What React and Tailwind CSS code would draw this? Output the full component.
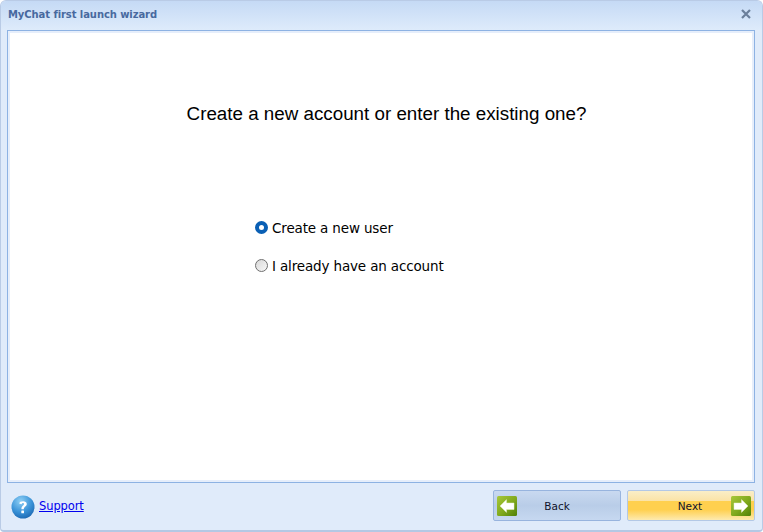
// App.jsx - MyChat first launch wizard
const uiFont = "font-['Tahoma','DejaVu_Sans',sans-serif]"

function ArrowTile({ flip }) {
  return (
    <svg width="20" height="20" viewBox="0 0 20 20" className="shrink-0">
      <defs>
        <linearGradient id={flip ? 'tileL' : 'tileR'} x1="0" y1="0" x2="1" y2="1">
          <stop offset="0" stopColor="#a8c83a" />
          <stop offset="0.55" stopColor="#7fa81c" />
          <stop offset="1" stopColor="#4f8008" />
        </linearGradient>
      </defs>
      <rect x="0" y="0" width="20" height="20" rx="1.5" fill={`url(#${flip ? 'tileL' : 'tileR'})`} />
      <path
        d={flip ? 'M3 10 L9.5 3.6 V7 H17 V13.5 H9.5 V16.4 Z' : 'M17 10 L10.5 3.6 V7 H3 V13.5 H10.5 V16.4 Z'}
        fill="#fff"
        stroke="#e6f0c8"
        strokeWidth="0.5"
      />
    </svg>
  )
}

function HelpIcon() {
  return (
    <svg width="24" height="24" viewBox="0 0 24 24" className="shrink-0">
      <defs>
        <radialGradient id="helpBall" cx="0.4" cy="0.25" r="0.85">
          <stop offset="0" stopColor="#8fd0f5" />
          <stop offset="0.55" stopColor="#3a93d8" />
          <stop offset="1" stopColor="#1660ab" />
        </radialGradient>
      </defs>
      <circle cx="12" cy="12" r="11.5" fill="url(#helpBall)" />
      <path
        d="M8.2 8.6 C8.6 5.6 15.8 5.2 15.8 9 C15.8 11.6 12.8 11.6 12.8 14.2 H10.4 C10.4 10.8 13 10.6 13 9.1 C13 7.6 10.8 7.8 10.6 9.2 Z"
        fill="#fff"
      />
      <rect x="10.3" y="15.6" width="2.7" height="2.7" rx="0.5" fill="#fff" />
    </svg>
  )
}

function Radio({ checked, label }) {
  return (
    <label className="flex items-center h-[20px]">
      {checked ? (
        <span className="w-[13px] h-[13px] -mt-[1px] rounded-full border-[4px] border-[#0a5fb4] bg-white" />
      ) : (
        <span className="w-[13px] h-[13px] -mt-[1px] rounded-full border border-[#6f6f6f] bg-gradient-to-br from-[#d8d8d8] to-[#f8f8f8]" />
      )}
      <span className="ml-[4px] text-[13.5px] text-black tracking-[-0.15px]">{label}</span>
    </label>
  )
}

export default function App() {
  return (
    <div className={`${uiFont} w-[763px] h-[532px] flex flex-col overflow-hidden rounded-t-[6px] rounded-b-[4px] border border-[#b9cbe6] border-b-[2px] border-b-[#b4c8e4] bg-[#e0ebfa]`}>
      {/* title bar */}
      <div className="h-[29px] shrink-0 flex items-start justify-between pl-[7px] pr-[11px] pt-[6px] bg-gradient-to-b from-[#c5daf5] to-[#deebfb]">
        <span className="text-[10px] leading-[15px] font-bold text-[#48699f] tracking-[-0.08px]">MyChat first launch wizard</span>
        <svg width="10" height="10" viewBox="0 0 10 10" className="mt-[2px]">
          <path d="M1 1 L9 9 M9 1 L1 9" stroke="#6b7f9a" strokeWidth="2.2" />
        </svg>
      </div>

      {/* page */}
      <div className="ml-[6px] mr-[7px] h-[453px] shrink-0 border border-[#8db2e3]">
        <div className="h-full border-2 border-[#e6eefb] bg-white">
          <h1 className="pt-[69px] pl-[11px] text-center font-['Liberation_Sans',sans-serif] text-[18.8px] leading-[24px] text-black">
            Create a new account or enter the existing one?
          </h1>
          <div className="ml-[245px] mt-[92px] flex flex-col gap-[18px]">
            <Radio checked label="Create a new user" />
            <Radio label="I already have an account" />
          </div>
        </div>
      </div>

      {/* bottom bar */}
      <div className="flex-1 flex items-start justify-between pl-[10px] pr-[7px] pt-[7px]">
        <div className="flex items-center gap-[4px] pt-[5px]">
          <HelpIcon />
          <a className="text-[11.5px] text-[#0000ee] underline tracking-[-0.1px]">Support</a>
        </div>
        <div className="flex gap-[6px]">
          <button className="w-[128px] h-[31px] flex items-center px-[3px] rounded-[2px] border border-[#98b4de] bg-gradient-to-b from-[#c9d9f0] via-[#b9cde8] to-[#c6d8f0] text-[10.5px] text-[#10122a]">
            <ArrowTile flip />
            <span className="flex-1 text-center pt-[2px]">Back</span>
            <span className="w-[20px]" />
          </button>
          <button className="w-[128px] h-[31px] flex items-center px-[3px] rounded-[2px] border border-[#b3c8e6] bg-[linear-gradient(#faeec8_0%,#fbe3a6_34%,#ffd04f_35%,#ffd04f_65%,#fdeab0_100%)] text-[10.5px] text-[#10122a]">
            <span className="w-[20px]" />
            <span className="flex-1 text-center pt-[2px] pr-[2px]">Next</span>
            <ArrowTile />
          </button>
        </div>
      </div>
    </div>
  )
}
